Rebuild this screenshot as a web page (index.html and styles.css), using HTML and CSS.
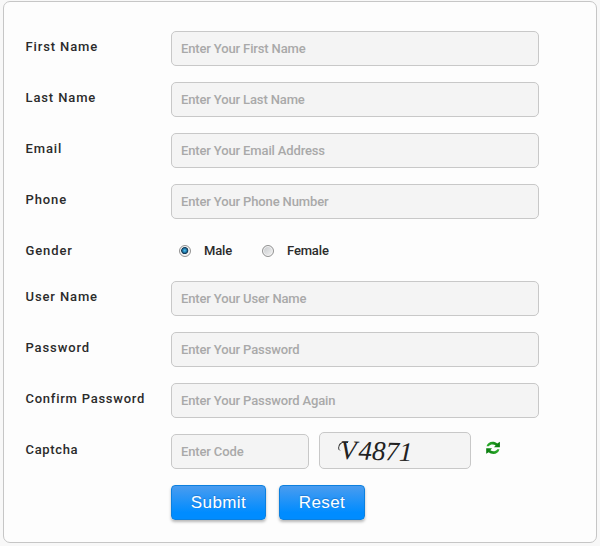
FILE: index.html
```html
<!DOCTYPE html>
<html lang="en">
<head>
<meta charset="utf-8">
<title>Registration</title>
<link rel="stylesheet" href="styles.css">
</head>
<body>
<form class="panel">
  <div class="row"><label>First Name</label><input class="field" placeholder="Enter Your First Name"></div>
  <div class="row"><label>Last Name</label><input class="field" placeholder="Enter Your Last Name"></div>
  <div class="row"><label>Email</label><input class="field" placeholder="Enter Your Email Address"></div>
  <div class="row"><label>Phone</label><input class="field" placeholder="Enter Your Phone Number"></div>
  <div class="row gender">
    <label>Gender</label>
    <div class="choices">
      <span class="radio checked"></span><span class="male">Male</span>
      <span class="radio"></span><span>Female</span>
    </div>
  </div>
  <div class="row"><label>User Name</label><input class="field" placeholder="Enter Your User Name"></div>
  <div class="row"><label>Password</label><input class="field" placeholder="Enter Your Password"></div>
  <div class="row"><label class="confirm">Confirm Password</label><input class="field" placeholder="Enter Your Password Again"></div>
  <div class="row">
    <label class="short">Captcha</label>
    <input class="field code" placeholder="Enter Code">
    <div class="captcha"><span class="captcha-text"><span class="initial">V</span>4871</span></div>
    <svg class="refresh" viewBox="0 0 14 14" width="14" height="14">
      <defs><linearGradient id="g" x1="0" y1="0" x2="1" y2="0"><stop offset="0" stop-color="#2fb02f"/><stop offset="1" stop-color="#087a0c"/></linearGradient>
      <linearGradient id="h" x1="0" y1="0" x2="1" y2="0"><stop offset="0" stop-color="#087a0c"/><stop offset="1" stop-color="#2fb02f"/></linearGradient></defs>
      <path fill="url(#g)" d="M.5 5.300C1.500 2.300 3.600.8 6.500.8c2 0 3.500.6 4.700 1.700L13.900.8V6.300H8L9.600 4.300C7.300 2.900 4.300 3.100 2.700 5.300Z"/>
      <path fill="url(#h)" d="M13.500 8.200C12.500 11.500 10.400 12.900 7.500 12.900c-2 0-3.500-.6-4.700-1.700L.2 12.800V7.300H6L4.400 9.300c2.300 1.500 5.300 1.300 6.900-1.100Z"/>
    </svg>
  </div>
  <div class="buttons"><button type="button" class="submit">Submit</button><button type="button" class="reset">Reset</button></div>
</form>
</body>
</html>
```
FILE: styles.css
```css
* { box-sizing: border-box; }
body {
  margin: 0;
  padding: 1px 3px 0;
  background: #f8f8f8;
  font-family: Roboto, "Open Sans", sans-serif;
  font-size: 13px;
  font-weight: 500;
  color: #2b2b2b;
}
.panel {
  height: 542px;
  padding: 29px 21px 0;
  border: 1px solid #c6c6c6;
  border-radius: 7px;
  background: #fdfdfd;
}
.row { display: flex; height: 35px; margin-bottom: 16px; }
label { width: 146px; padding-left: .5px; line-height: 31px; letter-spacing: .88px; white-space: nowrap; }
.confirm { letter-spacing: .75px; }
.short { letter-spacing: .65px; }
.field {
  width: 368px;
  height: 35px;
  padding: 0 9px;
  border: 1px solid #c8c8c8;
  border-radius: 5px;
  background: #f4f4f4;
  font: inherit;
  letter-spacing: -.14px;
}
.field::placeholder { color: #a9a9a9; opacity: 1; }
.gender { height: 30px; }
.choices { display: flex; align-items: center; height: 31px; padding-left: 8px; letter-spacing: -.15px; }
.radio {
  width: 12px;
  height: 12px;
  margin-right: 13px;
  border: 1px solid #929292;
  border-radius: 50%;
  background: linear-gradient(135deg, #c5c8cb, #f4f4f4);
  box-shadow: inset 0 0 0 1px #f5f5f5;
}
.checked { background: radial-gradient(circle at 47% 45%, #58c6ef 0, #2384b8 1.7px, #12344e 3.2px, #eee 4px); }
.male { width: 58px; }
.code { width: 138px; }
.captcha {
  width: 152px;
  height: 37px;
  margin: -2px 0 0 10px;
  padding-left: 20px;
  border: 1px solid #c8c8c8;
  border-radius: 5px;
  background: #f4f4f4;
}
.captcha-text {
  display: inline-block;
  font: italic 400 27px/37px "Liberation Serif", serif;
  color: #222;
  transform: rotate(2deg);
}
.initial { position: relative; margin-right: 2px; }
/* Entry stroke of the decorated capital */
.initial::before {
  content: "";
  position: absolute;
  left: -2px;
  top: 7px;
  width: 9px;
  height: 8px;
  border: solid #222;
  border-width: 1.5px 0 0 1.5px;
  border-radius: 9px 0 0 5px;
}
.refresh { margin: 7px 0 0 15px; }
.buttons { display: flex; gap: 13px; padding-left: 146px; }
button {
  height: 35px;
  padding: 0;
  border: 1px solid #0c80df;
  border-radius: 4px;
  background: linear-gradient(#4a9cef, #008cff 80%);
  box-shadow: 0 2px 3px rgba(0, 0, 0, .28);
  font: 17px "Liberation Sans", Arial, sans-serif;
  letter-spacing: .4px;
  color: #fff;
  text-shadow: 0 -1px 1px rgba(0, 60, 130, .3);
}
.submit { width: 95px; }
.reset { width: 86px; }
```
